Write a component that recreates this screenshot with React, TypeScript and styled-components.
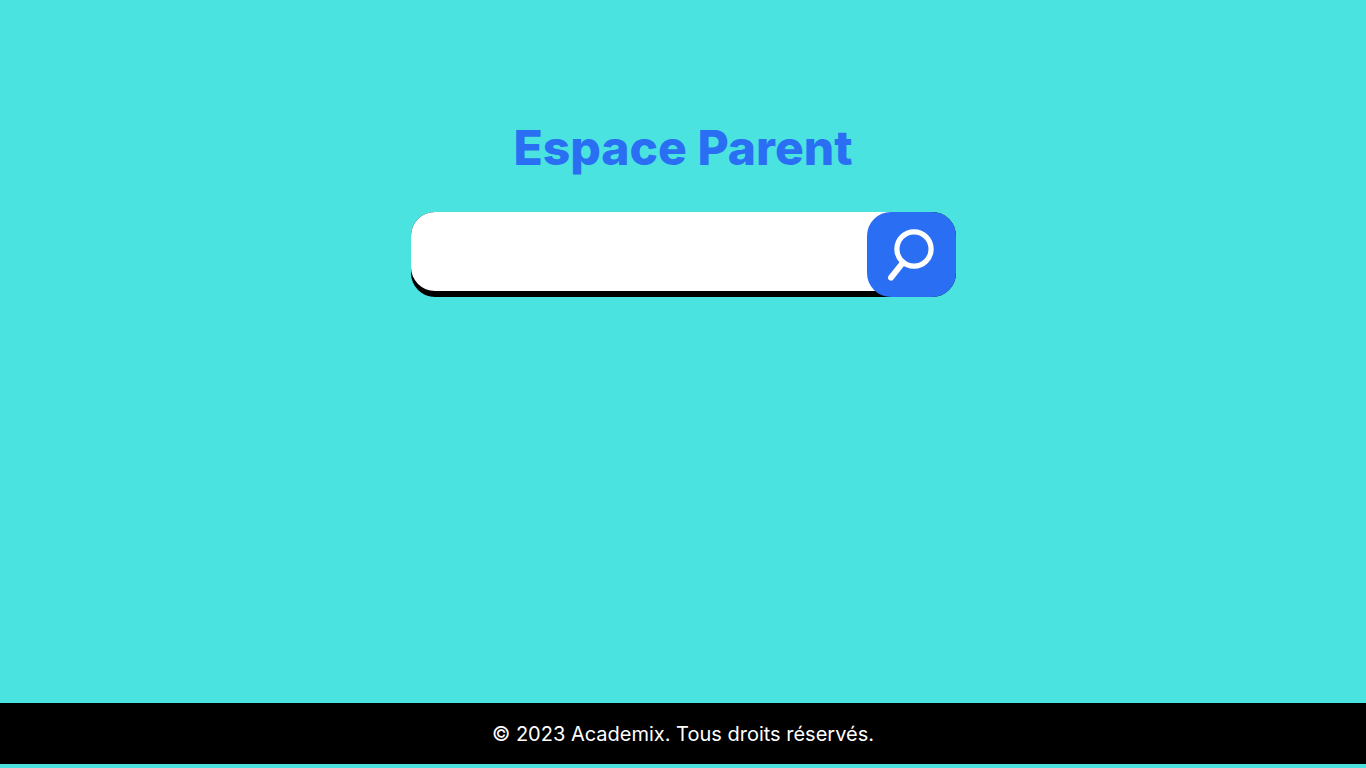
import React from "react";
import styled, { createGlobalStyle } from "styled-components";

const GlobalStyle = createGlobalStyle`
  *, *::before, *::after { box-sizing: border-box; }
  body { margin: 0; background: #4be3df; font-family: Inter, "Liberation Sans", sans-serif; }
`;

const Page = styled.div`
  display: flex;
  flex-direction: column;
  min-height: 100vh;
  padding-bottom: 4px;
`;

const Main = styled.main`
  flex: 1;
  display: flex;
  flex-direction: column;
  align-items: center;
  padding: 120px 24px 24px;
`;

const Title = styled.h1`
  margin: 0 0 36px;
  font-size: 48px;
  line-height: 56px;
  font-weight: 800;
  color: #2a6ff3;
`;

const SearchForm = styled.form`
  display: flex;
  width: 100%;
  max-width: 545px;
  height: 85px;
  border-radius: 24px;
  background: #000;
`;

const SearchField = styled.input`
  flex: 1;
  min-width: 0;
  height: 79px;
  margin-right: -48px;
  padding: 0 64px 0 24px;
  border: 0;
  border-radius: 24px;
  outline: 0;
  background: #fff;
  color: #000;
  font: 400 24px Inter, "Liberation Sans", sans-serif;
`;

const SearchButton = styled.button`
  display: flex;
  width: 89px;
  height: 85px;
  padding: 0;
  border: 0;
  border-radius: 24px;
  background: #2a6ff3;
  cursor: pointer;
  z-index: 1;
`;

const Footer = styled.footer`
  padding: 17px 24px 15px;
  background: #000;
  color: #fff;
  font-size: 20px;
  line-height: 29px;
  text-align: center;
`;

export default function App() {
  return (
    <>
      <GlobalStyle />
      <Page>
        <Main>
          <Title>Espace Parent</Title>
          <SearchForm role="search" onSubmit={(event) => event.preventDefault()}>
            <SearchField type="text" aria-label="Rechercher" />
            <SearchButton type="submit" aria-label="Lancer la recherche">
              <svg width="89" height="85" viewBox="0 0 89 85" fill="none" stroke="#fff" aria-hidden="true">
                <circle cx="47" cy="37" r="17.1" strokeWidth="5.2" />
                <path d="M36 50.5L24 65.7" strokeWidth="6" strokeLinecap="round" />
              </svg>
            </SearchButton>
          </SearchForm>
        </Main>
        <Footer>© 2023 Academix. Tous droits réservés.</Footer>
      </Page>
    </>
  );
}
